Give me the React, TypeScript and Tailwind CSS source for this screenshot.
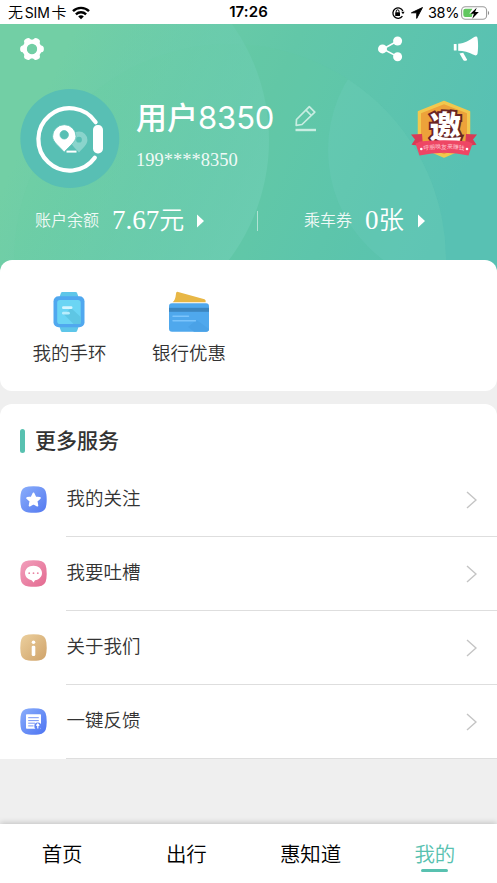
import type { ReactNode } from "react";
import clsx from "clsx";

type Service = {
  label: string;
  icon: ReactNode;
};

const sans = "font-[Inter,'Noto_Sans_CJK_SC',sans-serif]";
const serif = "font-['Liberation_Serif','Noto_Sans_CJK_SC',serif]";

function StatusBar() {
  return (
    <div className="h-6 bg-white px-2 grid grid-cols-3 items-center text-black text-[15px] leading-6">
      <div className="flex items-center gap-[6px]">
        <span className="whitespace-nowrap font-[350] tracking-[-0.2px]">
          无<span className="ml-[2px] mr-[2px] text-[14px] font-normal">SIM</span>卡
        </span>
        <svg width="18" height="14" viewBox="0 0 18 14" fill="none" stroke="#000" strokeWidth="2.4">
          <path d="M1 5.2C5.4 0.7 12.6 0.7 17 5.2" />
          <path d="M3.9 8.3C6.8 5.5 11.2 5.5 14.1 8.3" />
          <path d="M6.2 10.4C7.8 8.9 10.2 8.9 11.8 10.4L9 13.2Z" fill="#000" stroke="none" />
        </svg>
      </div>
      <div className="text-center font-semibold tracking-[0.1px] pb-px">17:26</div>
      <div className="flex items-center justify-end -mr-px">
        <svg width="14" height="14" viewBox="0 0 14 14" fill="none" stroke="#000" strokeWidth="1.3">
          <path d="M11.4 10.1A5.2 5.2 0 1 1 11.9 5.1" />
          <path d="M10.2 5.7h3.4L12 8.2z" fill="#000" stroke="none" />
          <rect x="4.2" y="6.3" width="4.8" height="3.6" rx="0.5" fill="#000" stroke="none" />
          <path d="M5.2 6.5V5.2a1.4 1.4 0 0 1 2.8 0v1.3" strokeWidth="1" />
        </svg>
        <svg className="ml-1.5" width="12" height="12" viewBox="0 0 12 12">
          <path d="M11.5 0.5L0.4 5.8h5.3v5.6z" stroke="#000" strokeWidth="0.9" strokeLinejoin="round" />
        </svg>
        <span className="ml-[5px] text-[14.5px] tracking-[-0.4px]">38%</span>
        <svg className="ml-[2px]" width="29" height="14" viewBox="0 0 29 14">
          <rect x="0.6" y="0.8" width="25" height="12.4" rx="3.8" fill="#fff" stroke="#9a9a9a" strokeWidth="1.1" />
          <path d="M4.3 2.7h7.2L8.3 7.4h3.4l-1 3.7H4.3a2 2 0 0 1-2-2V4.7a2 2 0 0 1 2-2z" fill="#62c760" />
          <path d="M15.7 1.7L9.4 7.8h3.5l-1.6 5L17.8 6h-3.7z" />
          <path d="M27 5v4c1.5-0.6 1.5-3.4 0-4z" fill="#8c8c8c" />
        </svg>
      </div>
    </div>
  );
}

function HeaderBackdrop() {
  return (
    <svg className="absolute inset-0" width="497" height="248" viewBox="0 24 497 248">
      <defs>
        <linearGradient id="base" gradientUnits="userSpaceOnUse" x1="60" y1="60" x2="440" y2="230">
          <stop offset="0" stopColor="#72cfa5" />
          <stop offset="0.5" stopColor="#62c7a8" />
          <stop offset="1" stopColor="#58c1b3" />
        </linearGradient>
        <linearGradient id="left" gradientUnits="userSpaceOnUse" x1="50" y1="80" x2="269" y2="180">
          <stop offset="0" stopColor="#6fceb4" stopOpacity="0" />
          <stop offset="1" stopColor="#6fceb4" stopOpacity="0.7" />
        </linearGradient>
        <clipPath id="big">
          <circle cx="230" cy="260" r="216" />
        </clipPath>
      </defs>
      <rect y="24" width="497" height="248" fill="url(#base)" />
      <circle cx="230" cy="260" r="216" fill="#66cc9f" opacity="0.12" />
      <circle cx="69" cy="140" r="200" fill="url(#left)" />
      <circle cx="465" cy="150" r="137" fill="#7ad4c9" opacity="0.2" clipPath="url(#big)" />
    </svg>
  );
}

function GearIcon() {
  return (
    <svg width="24" height="24" viewBox="0 0 24 24" fill="#fff">
      <circle cx="12" cy="12" r="7.4" fill="none" stroke="#fff" strokeWidth="4.4" />
      {[0, 60, 120, 180, 240, 300].map((deg) => (
        <path key={deg} d="M17.5 7.2C20 8 21 8.4 22.6 8.9Q23.9 9.5 23.9 12Q23.9 14.5 22.6 15.1C21 15.6 20 16 17.5 16.8Z" transform={`rotate(${deg} 12 12)`} />
      ))}
    </svg>
  );
}

function ShareIcon() {
  return (
    <svg width="25" height="26" viewBox="0 0 25 26" fill="#fff">
      <path d="M19.5 5L5 13L19.5 20.6" fill="none" stroke="#fff" strokeWidth="1.6" />
      <circle cx="4.5" cy="12.9" r="4.5" />
      <circle cx="19.6" cy="5" r="4.5" />
      <circle cx="19.6" cy="20.8" r="4.5" />
    </svg>
  );
}

function HornIcon() {
  return (
    <svg width="26" height="26" viewBox="0 0 26 26" fill="#fff">
      <rect x="0.8" y="8" width="2.8" height="6.5" rx="0.6" />
      <path d="M5.2 7.8C12 7.4 16.5 3.7 20.5 1.4C22.6 0.2 24 0.2 24.5 2C25.3 6 25.3 14 24.5 17.8C23.8 20 22 19.7 20 18.6C16 16.2 10.5 14.9 5.2 14.8Z" />
      <path d="M6.5 17.5L10.2 16.8L14 23.4C14.6 24.8 11.2 25.4 10.4 24.2Z" />
    </svg>
  );
}

function Avatar() {
  return (
    <svg width="100" height="100" viewBox="0 0 100 100">
      <circle cx="49.8" cy="49.6" r="49.5" fill="#58bfb4" />
      <path d="M75.6 33.2A31.2 31.2 0 1 0 74.8 68.8" fill="none" stroke="#fff" strokeWidth="4.2" strokeLinecap="round" />
      <rect x="73" y="36" width="10" height="28.5" rx="4.7" fill="#fff" />
      <path fill="#8ad4cc" fillRule="evenodd" d="M59 63.6C55 58.8 50.6 55.6 50.6 51a8.4 8.4 0 0 1 16.8 0C67.4 55.6 63 58.8 59 63.6zM59 47.8a2.9 2.9 0 1 0 0 5.8a2.9 2.9 0 0 0 0-5.8z" />
      <path fill="#fff" stroke="#58bfb4" strokeWidth="0.8" fillRule="evenodd" d="M44.2 63.2C39.2 57 32.6 53 32.6 47.4a11.7 11.7 0 0 1 23.4 0C56 53 49.2 57 44.2 63.2zM44.2 41.6a4.2 4.2 0 1 0 0 8.4a4.2 4.2 0 0 0 0-8.4z" />
      <rect x="46.5" y="61.6" width="10" height="2" fill="#fff" />
    </svg>
  );
}

function InviteBadge() {
  return (
    <svg width="68" height="62" viewBox="0 0 68 62">
      <path d="M34 2.5L59.5 12.8V47L34 58L8.5 47V12.8Z" fill="#f2c84e" stroke="#f2c84e" strokeWidth="1.5" strokeLinejoin="round" />
      <path d="M34 5.2L57 14.3V45L34 55.3L11 45V14.3Z" fill="#eda23a" />
      <text
        x="35.5"
        y="40"
        textAnchor="middle"
        fontSize="32"
        fontWeight="900"
        fill="#fff"
        stroke="#6a2524"
        strokeWidth="4"
        strokeLinejoin="miter"
        paintOrder="stroke"
        fontFamily="'Noto Sans CJK SC', sans-serif"
      >
        邀
      </text>
      <path d="M1 35.5L12 35L13 47L1.5 45.8L5 40.5ZM67 35.5L56 35L55 47L66.5 45.8L63 40.5Z" fill="#d93a55" />
      <path d="M5.5 44.5Q8.5 43.5 10 42.5Q34 40 58 42.5Q60 43.5 62.5 44.5L58.5 56.5Q34 51 9.5 56.5Z" fill="#ee4664" />
      <path id="ribbon" d="M13 51.4Q34 47.8 55 51.4" fill="none" />
      <text fontSize="5.8" fill="#ffc5cf" fontFamily="'Noto Sans CJK SC', sans-serif">
        <textPath href="#ribbon" startOffset="50%" textAnchor="middle">呼朋唤友来赚钱</textPath>
      </text>
      <circle cx="11.3" cy="50" r="1.3" fill="#fff" />
      <circle cx="57" cy="50" r="1.3" fill="#fff" />
    </svg>
  );
}

function WatchIcon() {
  return (
    <svg width="32" height="42" viewBox="0 0 32 42">
      <path d="M6.5 6L8 1.7Q8.3 1 9.3 1H22.5Q23.7 1 24 1.7L25.5 6V36L24 40.3Q23.7 41 22.5 41H9.3Q8.3 41 8 40.3L6.5 36Z" fill="#5ec6e9" />
      <rect x="0.5" y="5.3" width="31" height="31" rx="5" fill="#50a8ef" />
      <rect x="4.2" y="9" width="23.5" height="24" rx="2.8" fill="#6bd5f4" />
      <path d="M11 23.5L18 17L27.7 26V33H20.5Z" fill="#5ec6e4" />
      <rect x="9" y="15.3" width="10.5" height="2.8" rx="1.4" fill="#d5f5ff" />
      <rect x="9" y="20.8" width="7.8" height="2.8" rx="1.4" fill="#b9edfc" />
    </svg>
  );
}

function CardIcon() {
  return (
    <svg width="40" height="42" viewBox="0 0 40 42">
      <path d="M8.3 0.8L35.5 8.3Q37 8.9 36.7 11.2H3.5Q6.5 9 6.8 4Q7 0.6 8.3 0.8Z" fill="#e8b746" />
      <rect y="12.3" width="40" height="28.5" rx="3" fill="#4fa8ed" />
      <path d="M19 36L27.5 29L40 38Q40 40.8 37 40.8H25Z" fill="#4aa2e7" />
      <rect y="16.8" width="40" height="4" fill="#3c86bf" />
      <path d="M4 25.3H19.5M4 29.8H26.5" stroke="#7cc4fb" strokeWidth="1.4" strokeLinecap="round" />
    </svg>
  );
}

function Tile({ id, from, to, children }: { id: string; from: string; to: string; children: ReactNode }) {
  return (
    <svg className="mb-0.5" width="27" height="27" viewBox="0 0 27 27">
      <defs>
        <linearGradient id={id} x1="0" y1="0" x2="1" y2="1">
          <stop stopColor={from} />
          <stop offset="1" stopColor={to} />
        </linearGradient>
      </defs>
      <path d="M8.5 0.6Q13.5 0 18.5 0.6Q25.8 1.2 26.4 8.5Q27 13.5 26.4 18.5Q25.8 25.8 18.5 26.4Q13.5 27 8.5 26.4Q1.2 25.8 0.6 18.5Q0 13.5 0.6 8.5Q1.2 1.2 8.5 0.6Z" fill={`url(#${id})`} />
      {children}
    </svg>
  );
}

const services: Service[] = [
  {
    label: "我的关注",
    icon: (
      <Tile id="star" from="#8aaefb" to="#5479f0">
        <path d="M13.5 7.4L15.4 11.5L19.9 12L16.6 15.1L17.4 19.6L13.5 17.4L9.6 19.6L10.4 15.1L7.1 12L11.6 11.5Z" fill="#fff" stroke="#fff" strokeWidth="1.8" strokeLinejoin="round" />
      </Tile>
    ),
  },
  {
    label: "我要吐槽",
    icon: (
      <Tile id="chat" from="#f2a0bd" to="#e3698f">
        <path d="M13.5 5.8C18.5 5.8 22 9 22 13C22 16.8 19 19.7 15 20.2L13.6 22.4L11.6 20.2C7.8 19.5 5 16.6 5 13C5 9 8.5 5.8 13.5 5.8Z" fill="#fff" />
        <circle cx="9.2" cy="13.2" r="0.9" fill="#e884a4" />
        <circle cx="13.5" cy="13.2" r="0.9" fill="#e884a4" />
        <circle cx="17.8" cy="13.2" r="0.9" fill="#e884a4" />
      </Tile>
    ),
  },
  {
    label: "关于我们",
    icon: (
      <Tile id="info" from="#ecd09e" to="#cfa269">
        <circle cx="13.5" cy="8.2" r="1.8" fill="#fff" />
        <rect x="11.7" y="11.7" width="3.6" height="10.4" rx="1.4" fill="#fff" />
      </Tile>
    ),
  },
  {
    label: "一键反馈",
    icon: (
      <Tile id="feedback" from="#8aaefb" to="#4c73f2">
        <rect x="6" y="6.2" width="15" height="14.5" rx="0.8" fill="#fff" />
        <path d="M8.2 9.7H18.8M8.2 12.6H18.8M8.2 15.2H15M8.2 17.9H13.5" stroke="#7896f5" />
        <circle cx="17.8" cy="18" r="3.5" fill="#5f83f4" />
        <path d="M17.8 20.5V16.5M16.3 17.7L17.8 16L19.3 17.7" fill="none" stroke="#fff" strokeWidth="1.2" />
      </Tile>
    ),
  },
];

const tabs = ["首页", "出行", "惠知道", "我的"];

function Caret() {
  return (
    <svg width="7" height="14" viewBox="0 0 7 14" fill="#fff">
      <path d="M0 0.5L7 7L0 13.5Z" />
    </svg>
  );
}

function Header() {
  return (
    <header className="relative h-[248px] shrink-0 text-white">
      <HeaderBackdrop />
      <div className="relative">
        <div className="flex items-center h-[50px] pl-5 pr-[18px]">
          <GearIcon />
          <div className="ml-auto flex items-center gap-[50px]">
            <ShareIcon />
            <HornIcon />
          </div>
        </div>

        <div className="flex h-[130px] pl-5 pt-[15px]">
          <Avatar />
          <div className="ml-4 pt-[9px]">
            <div className="flex items-center h-10">
              <div className="w-[139px] text-[31px] leading-10 font-medium whitespace-nowrap">
                用户<span className="font-normal tracking-[-0.1px]">8350</span>
              </div>
              <svg className="ml-5" width="22" height="27" viewBox="0 0 22 27" fill="none" stroke="#c9ede2" strokeWidth="1.7">
                <path d="M1.5 14.5L14.3 1.7L19.8 7.2L7 19.5L1.2 20.3Z" strokeLinejoin="round" />
                <path d="M11 5.2L16.3 10.5" />
                <path d="M0.5 25H21" strokeWidth="2.4" />
              </svg>
            </div>
            <div className={clsx(serif, "mt-3 text-[18.5px] leading-5 opacity-90")}>199****8350</div>
          </div>
          <div className="ml-auto mr-[19px] pt-[10px]">
            <InviteBadge />
          </div>
        </div>

        <div className={clsx(serif, "flex items-center h-[33px] pl-[35px]")}>
          <span className="w-[77px] text-base font-[350] opacity-90">账户余额</span>
          <span className="w-[85px] text-[27px] leading-8 whitespace-nowrap">
            7.67<span className="text-[25px] font-[350]">元</span>
          </span>
          <Caret />
          <span className="ml-[53px] w-px h-5 bg-white/50" />
          <span className="ml-[46px] w-[61px] text-base font-[350] opacity-90">乘车券</span>
          <span className="w-[53px] text-[27px] leading-8 whitespace-nowrap">
            0<span className="text-[25.5px] font-[350]">张</span>
          </span>
          <Caret />
        </div>
      </div>
    </header>
  );
}

export default function App() {
  return (
    <div className={clsx(sans, "w-[497px] h-[883px] overflow-hidden flex flex-col bg-[#efefef] text-[#333]")}>
      <StatusBar />
      <Header />

      <section className="relative -mt-3 h-[131px] shrink-0 rounded-[12px] bg-white flex pl-[9px] pt-[31px] font-[350]">
        <div className="w-[120px] flex flex-col items-center">
          <WatchIcon />
          <span className="mt-1.5 pl-px text-[18.5px] leading-7">我的手环</span>
        </div>
        <div className="w-[120px] flex flex-col items-center">
          <CardIcon />
          <span className="mt-1.5 text-[18.5px] leading-7">银行优惠</span>
        </div>
      </section>

      <section className="mt-[13px] shrink-0 rounded-t-[12px] bg-white">
        <div className="flex items-center h-[59px] pl-5 pt-[15px]">
          <span className="w-[5px] h-6 rounded-full bg-[#58c1b0]" />
          <h2 className="ml-[10px] pb-px text-[21px] leading-8 font-medium">更多服务</h2>
        </div>
        {services.map((s) => (
          <div key={s.label} className="flex items-center h-[74px] pl-5">
            {s.icon}
            <div className="ml-[19px] h-full flex-1 flex items-center justify-between border-b border-[#dedede] pr-5">
              <span className="pl-[0.5px] text-[18.5px] leading-7 pb-[3px] font-[350]">{s.label}</span>
              <svg width="11" height="18" viewBox="0 0 11 18" fill="none" stroke="#c4c4c4" strokeWidth="1.4">
                <path d="M1 1L10 9L1 17" />
              </svg>
            </div>
          </div>
        ))}
      </section>

      <nav className="mt-auto h-[59px] shrink-0 bg-white grid grid-cols-4 shadow-[0_-1px_6px_rgba(0,0,0,0.2)]">
        {tabs.map((t) => {
          const active = t === "我的";
          return (
            <div key={t} className={clsx("flex flex-col items-center pt-4", active ? "text-[#58c1b0]" : "text-black")}>
              <span className="text-[20.5px] leading-[30px] font-[350]">{t}</span>
              {active && <span className="-mt-px w-[27px] h-[3px] rounded-full bg-[#58c1b0]" />}
            </div>
          );
        })}
      </nav>
    </div>
  );
}
